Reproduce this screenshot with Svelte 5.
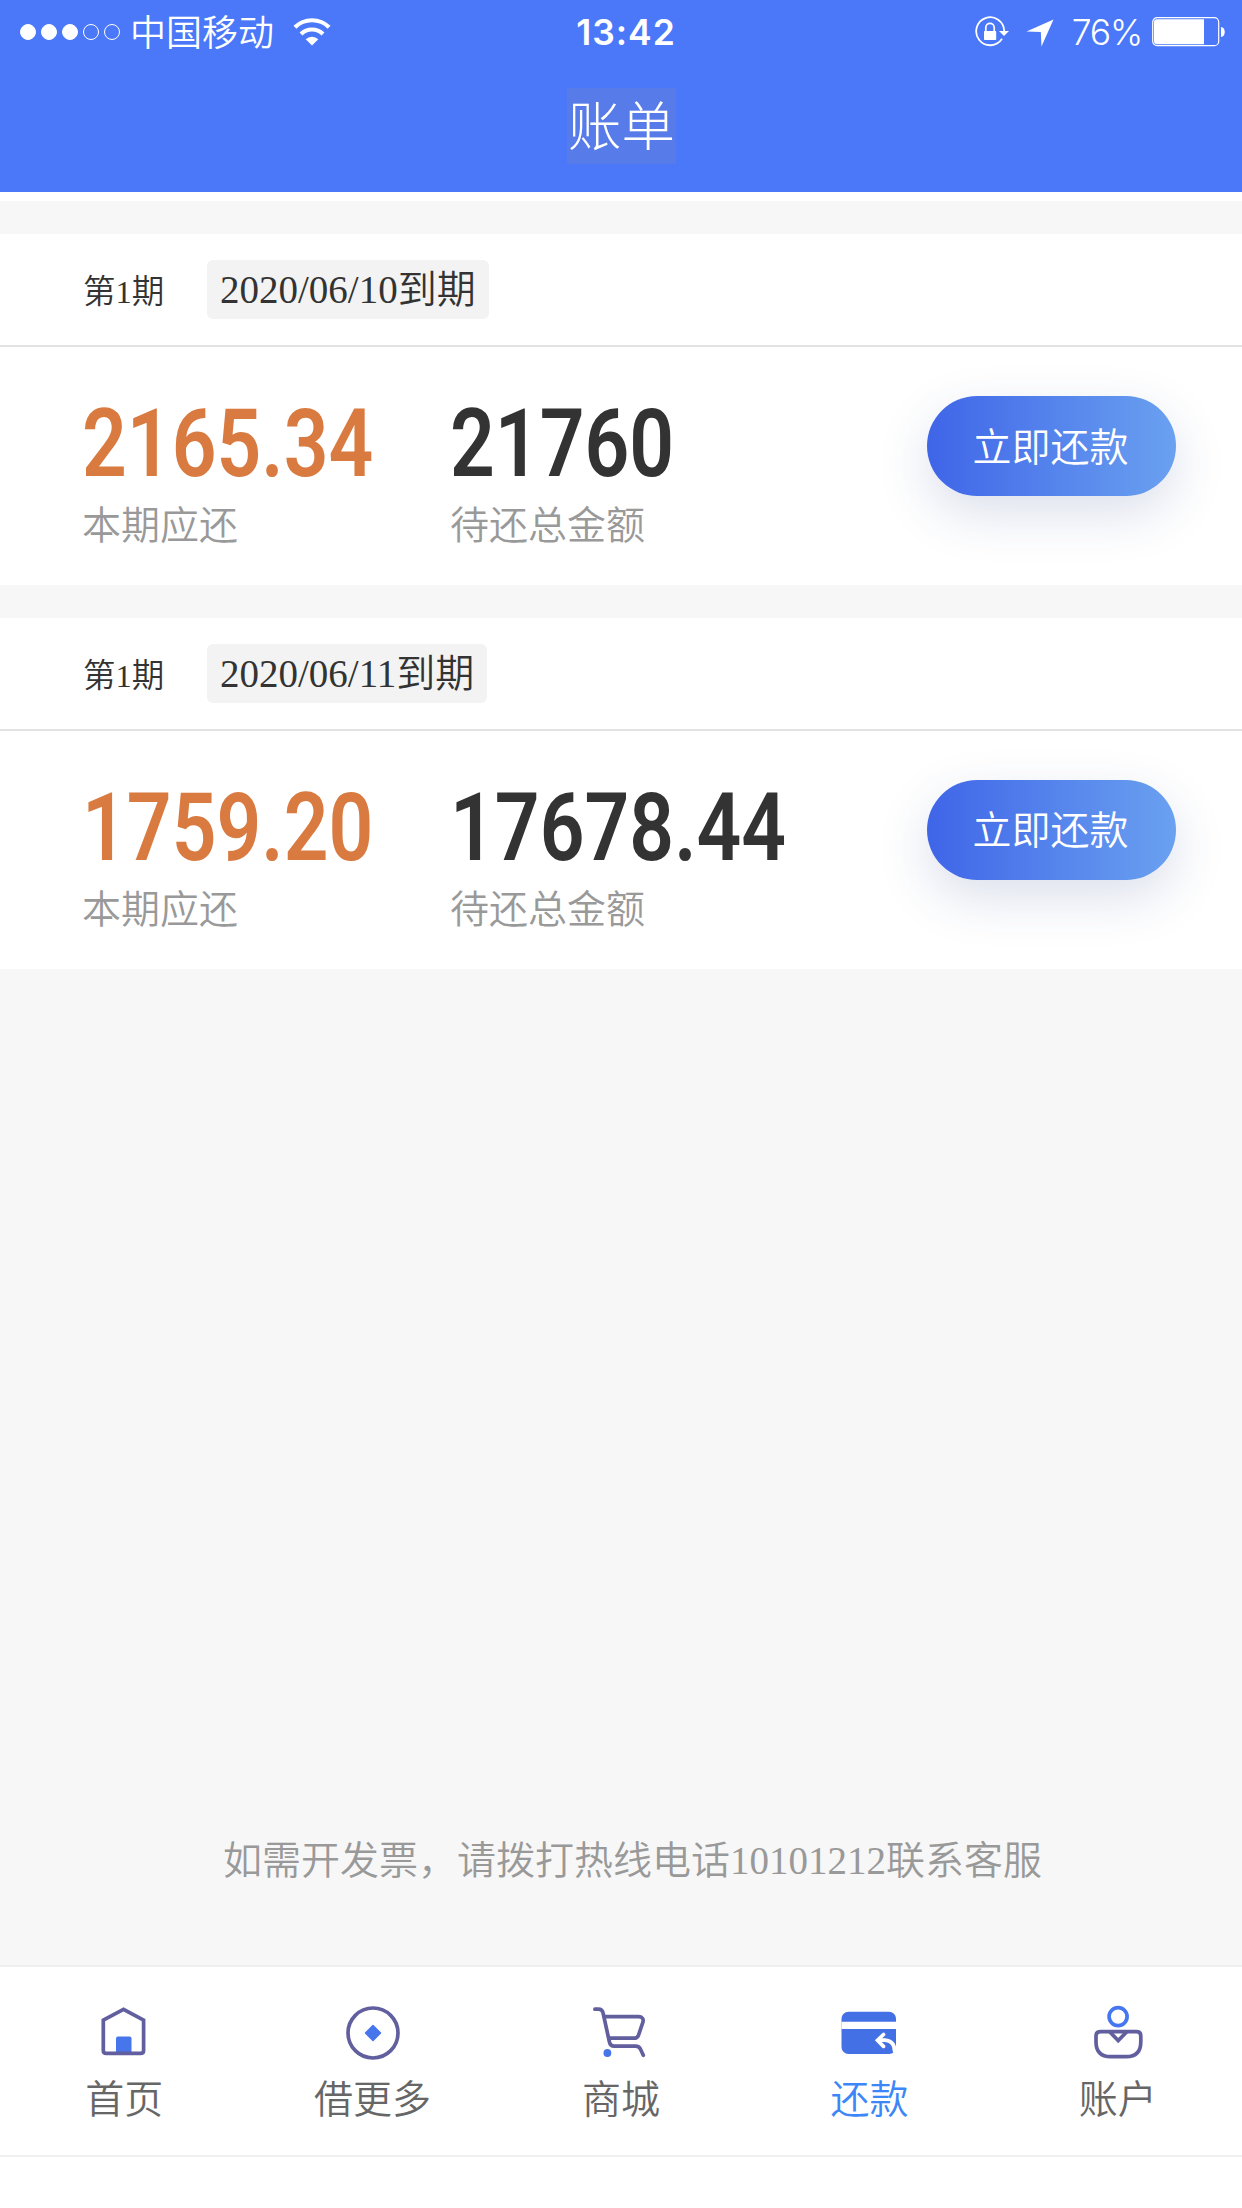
<script>
  const bills = [
    { term: '第1期', due: '2020/06/10到期', current: '2165.34', total: '21760' },
    { term: '第1期', due: '2020/06/11到期', current: '1759.20', total: '17678.44' }
  ];
  const tabs = [
    { id: 'home', label: '首页' },
    { id: 'more', label: '借更多' },
    { id: 'shop', label: '商城' },
    { id: 'repay', label: '还款', active: true },
    { id: 'user', label: '账户' }
  ];
  const signal = [true, true, true, false, false];
</script>

<div class="screen">
  <header>
    <div class="status">
      <div class="left">
        <div class="signal">
          {#each signal as on}<i class:on></i>{/each}
        </div>
        <span class="carrier">中国移动</span>
        <svg class="wifi" width="38" height="30" viewBox="0 0 38 30" fill="none" stroke="#fff">
          <path d="M1.9 10.2a24.5 24.5 0 0 1 34.2 0" stroke-width="4.2" />
          <path d="M8 16.9a16 16 0 0 1 22 0" stroke-width="4.2" />
          <path d="M12.7 22.2a9 9 0 0 1 12.6 0L19 28.4z" fill="#fff" stroke="none" />
        </svg>
      </div>
      <span class="time">13:42</span>
      <div class="right">
        <svg class="lock" width="36" height="32" viewBox="0 0 36 32" fill="none" stroke="#fff">
          <path d="M27 22.8A14 14 0 1 1 29.2 15" stroke-width="1.8" />
          <path d="M24 15h10l-5 5z" fill="#fff" stroke="none" />
          <path d="M10.8 16v-4.500a4.200 4.200 0 0 1 8.400 0V16" stroke-width="1.7" />
          <rect x="9" y="15" width="12.200" height="9" rx="0.8" fill="#fff" stroke="none" />
        </svg>
        <svg class="locate" width="28" height="28" viewBox="0 0 28 28">
          <path d="M27.500 0.500 0.500 12.500l14.300 0.600L15.500 27.500z" fill="#fff" />
        </svg>
        <span class="percent">76%</span>
        <svg class="battery" width="74" height="30" viewBox="0 0 74 30">
          <rect x="0.700" y="0.700" width="66" height="28" rx="4.500" fill="none" stroke="#fff" stroke-width="1.200" />
          <path d="M5 2.200h47v25H5a3 3 0 0 1-3-3v-19a3 3 0 0 1 3-3z" fill="#fff" />
          <path d="M69 10c5 0 5 10 0 10z" fill="#fff" />
        </svg>
      </div>
    </div>
    <div class="titlebar"><h1>账单</h1></div>
  </header>

  <main>
    {#each bills as bill}
      <section class="bill">
        <div class="bill-head">
          <span class="term">{bill.term}</span>
          <span class="due">{bill.due}</span>
        </div>
        <div class="bill-body">
          <div class="figure current">
            <div class="amount"><b>{bill.current}</b></div>
            <span class="caption">本期应还</span>
          </div>
          <div class="figure">
            <div class="amount"><b>{bill.total}</b></div>
            <span class="caption">待还总金额</span>
          </div>
          <button>立即还款</button>
        </div>
      </section>
    {/each}
    <p class="hotline">如需开发票，请拨打热线电话10101212联系客服</p>
  </main>

  <nav>
    {#each tabs as tab}
      <div class="tab" class:active={tab.active}>
        <svg width="60" height="60" viewBox="0 0 60 60" fill="none" stroke="#625f9f" stroke-width="3.700" stroke-linecap="round" stroke-linejoin="round">
          {#if tab.id === 'home'}
            <rect x="22" y="33.500" width="15.500" height="17" rx="2" fill="#4675ec" stroke="none" />
            <path d="M29.500 6.300 9.300 17v30.500q0 2.900 2.900 2.900h34.500q2.900 0 2.900-2.900V17z" stroke-linejoin="miter" />
          {:else if tab.id === 'more'}
            <circle cx="30" cy="30" r="25" />
            <path d="M30 22.500l7.500 7.500-7.500 7.500-7.500-7.500z" fill="#4675ec" stroke="#4675ec" stroke-width="1.500" />
          {:else if tab.id === 'shop'}
            <path d="M3.900 6.200h3.500q4 0 4.800 4.300l6.100 28q1 4.700 4.800 4.700h21.500q3.500 0 4.900 3l2.800 6" />
            <path d="M13.500 13.700h34q5.500 0.300 4.500 5.200l-4.500 13.300q-1.200 3-4.300 3H18.500" />
            <circle cx="16.400" cy="50" r="3.900" fill="#4675ec" stroke="none" />
          {:else if tab.id === 'repay'}
            <rect x="2.500" y="8.700" width="54.500" height="42.300" rx="7" fill="#4470e6" stroke="none" />
            <path d="M2.500 18.700h54.500v7.300H2.500z" fill="#fff" stroke="none" />
            <path d="M44.500 31.500 38.500 37.200l6 6.200M39.500 37.200h6.500q9.500 1 9.500 10.500" stroke="#fff" stroke-linejoin="miter" />
            <path d="M52 51.200q5-1.500 5-8v8z" fill="#fff" stroke="none" />
          {:else}
            <circle cx="30.100" cy="13.600" r="9" stroke="#4578f0" />
            <path d="M12.500 28.700h36q4.300 0 4.300 4.500v5.500q0 15-14.500 15H22.500q-14.500 0-14.500-15v-5.500q0-4.500 4.500-4.500z" />
            <path d="M22.300 29.500l7.900 8 7.900-8" stroke-linejoin="miter" />
          {/if}
        </svg>
        <span>{tab.label}</span>
      </div>
    {/each}
  </nav>
</div>

<style>
  :global(body) { background: #fff; }
  .screen {
    width: 1242px;
    height: 2208px;
    display: flex;
    flex-direction: column;
    overflow: hidden;
    background: #fff;
    color: #333;
    font-family: 'Liberation Serif', 'Noto Sans CJK SC', sans-serif;
    font-weight: 350;
  }
  header { height: 192px; background: #4a78f8; color: #fff; flex: none; }
  .status {
    height: 60px;
    display: grid;
    grid-template-columns: 1fr auto 1fr;
    align-items: center;
    font-family: Inter, 'Noto Sans CJK SC', sans-serif;
    font-size: 36px;
    line-height: 60px;
  }
  .left, .right { display: flex; align-items: center; height: 60px; }
  .left { padding-left: 20px; }
  .right { justify-content: flex-end; padding-right: 16px; }
  .signal { display: flex; gap: 5px; }
  .signal i {
    width: 16px;
    height: 16px;
    box-sizing: border-box;
    border: 1px solid #fff;
    border-radius: 50%;
  }
  .signal .on { background: #fff; }
  .carrier { margin-left: 10px; padding-top: 3px; }
  .wifi { margin-left: 19px; }
  .time { font-weight: 560; font-size: 35.5px; letter-spacing: 1px; padding: 3px 0 0 10px; }
  .lock { margin-right: 15px; }
  .locate { margin: 3px 18px 0 0; }
  .percent { padding-top: 3px; font-weight: 350; font-size: 35.500px; letter-spacing: -1.200px; margin-right: 10px; }
  .titlebar { height: 132px; display: flex; justify-content: center; align-items: flex-start; }
  h1 {
    margin: 28px 0 0 1px;
    padding: 2px 1px 0;
    height: 76px;
    box-sizing: border-box;
    line-height: 77px;
    font-size: 53.500px;
    font-weight: 300;
    background: #587bea;
  }
  main {
    margin-top: 9px;
    padding-top: 33px;
    height: 1764px;
    box-sizing: border-box;
    background: #f7f7f7;
    flex: none;
    display: flex;
    flex-direction: column;
    gap: 32.500px;
  }
  .bill { height: 351px; background: #fff; }
  .bill-head {
    height: 113px;
    box-sizing: border-box;
    padding: 0 83px;
    display: flex;
    align-items: center;
    border-bottom: 2px solid #e2e2e2;
  }
  .term { font-size: 32.500px; line-height: 40px; width: 124px; padding-top: 5px; }
  .due {
    height: 59px;
    line-height: 59px;
    padding: 0 13px;
    font-size: 39px;
    font-weight: 350;
    border-radius: 6px;
    background: #f3f3f3;
  }
  .bill-body {
    height: 238px;
    padding: 49px 66px 0 82px;
    box-sizing: border-box;
    display: grid;
    grid-template-columns: 368px 1fr 249px;
    align-items: start;
  }
  .amount { height: 96px; line-height: 96px; font-family: Roboto, sans-serif; font-size: 94px; }
  .amount b { display: inline-block; font-weight: 650; transform: scaleX(0.835); transform-origin: left; }
  .current .amount { color: #d97b41; }
  .caption { display: block; font-size: 39px; line-height: 56px; color: #999; margin-top: 6px; }
  button {
    height: 100px;
    padding: 0 2px 5px 0;
    border: 0;
    border-radius: 50px;
    background: linear-gradient(90deg, #3f65e8, #6aa1f0);
    box-shadow: 0 18px 50px rgba(50, 70, 140, 0.17);
    color: #fff;
    font: inherit;
    font-size: 39px;
  }
  .hotline {
    margin: auto 0 0;
    padding: 0 0 74px 23px;
    text-align: center;
    font-size: 39px;
    line-height: 60px;
    color: #999;
  }
  nav {
    height: 192px;
    box-sizing: border-box;
    display: grid;
    grid-template-columns: repeat(5, 1fr);
    border-top: 2px solid #efefef;
    border-bottom: 2px solid #efefef;
    flex: none;
  }
  .tab {
    display: flex;
    flex-direction: column;
    align-items: center;
    padding-top: 36px;
    font-size: 39px;
    line-height: 56px;
    color: #666;
  }
  .tab span { margin-top: 9px; }
  .tab.active { color: #3d86f8; }
</style>
